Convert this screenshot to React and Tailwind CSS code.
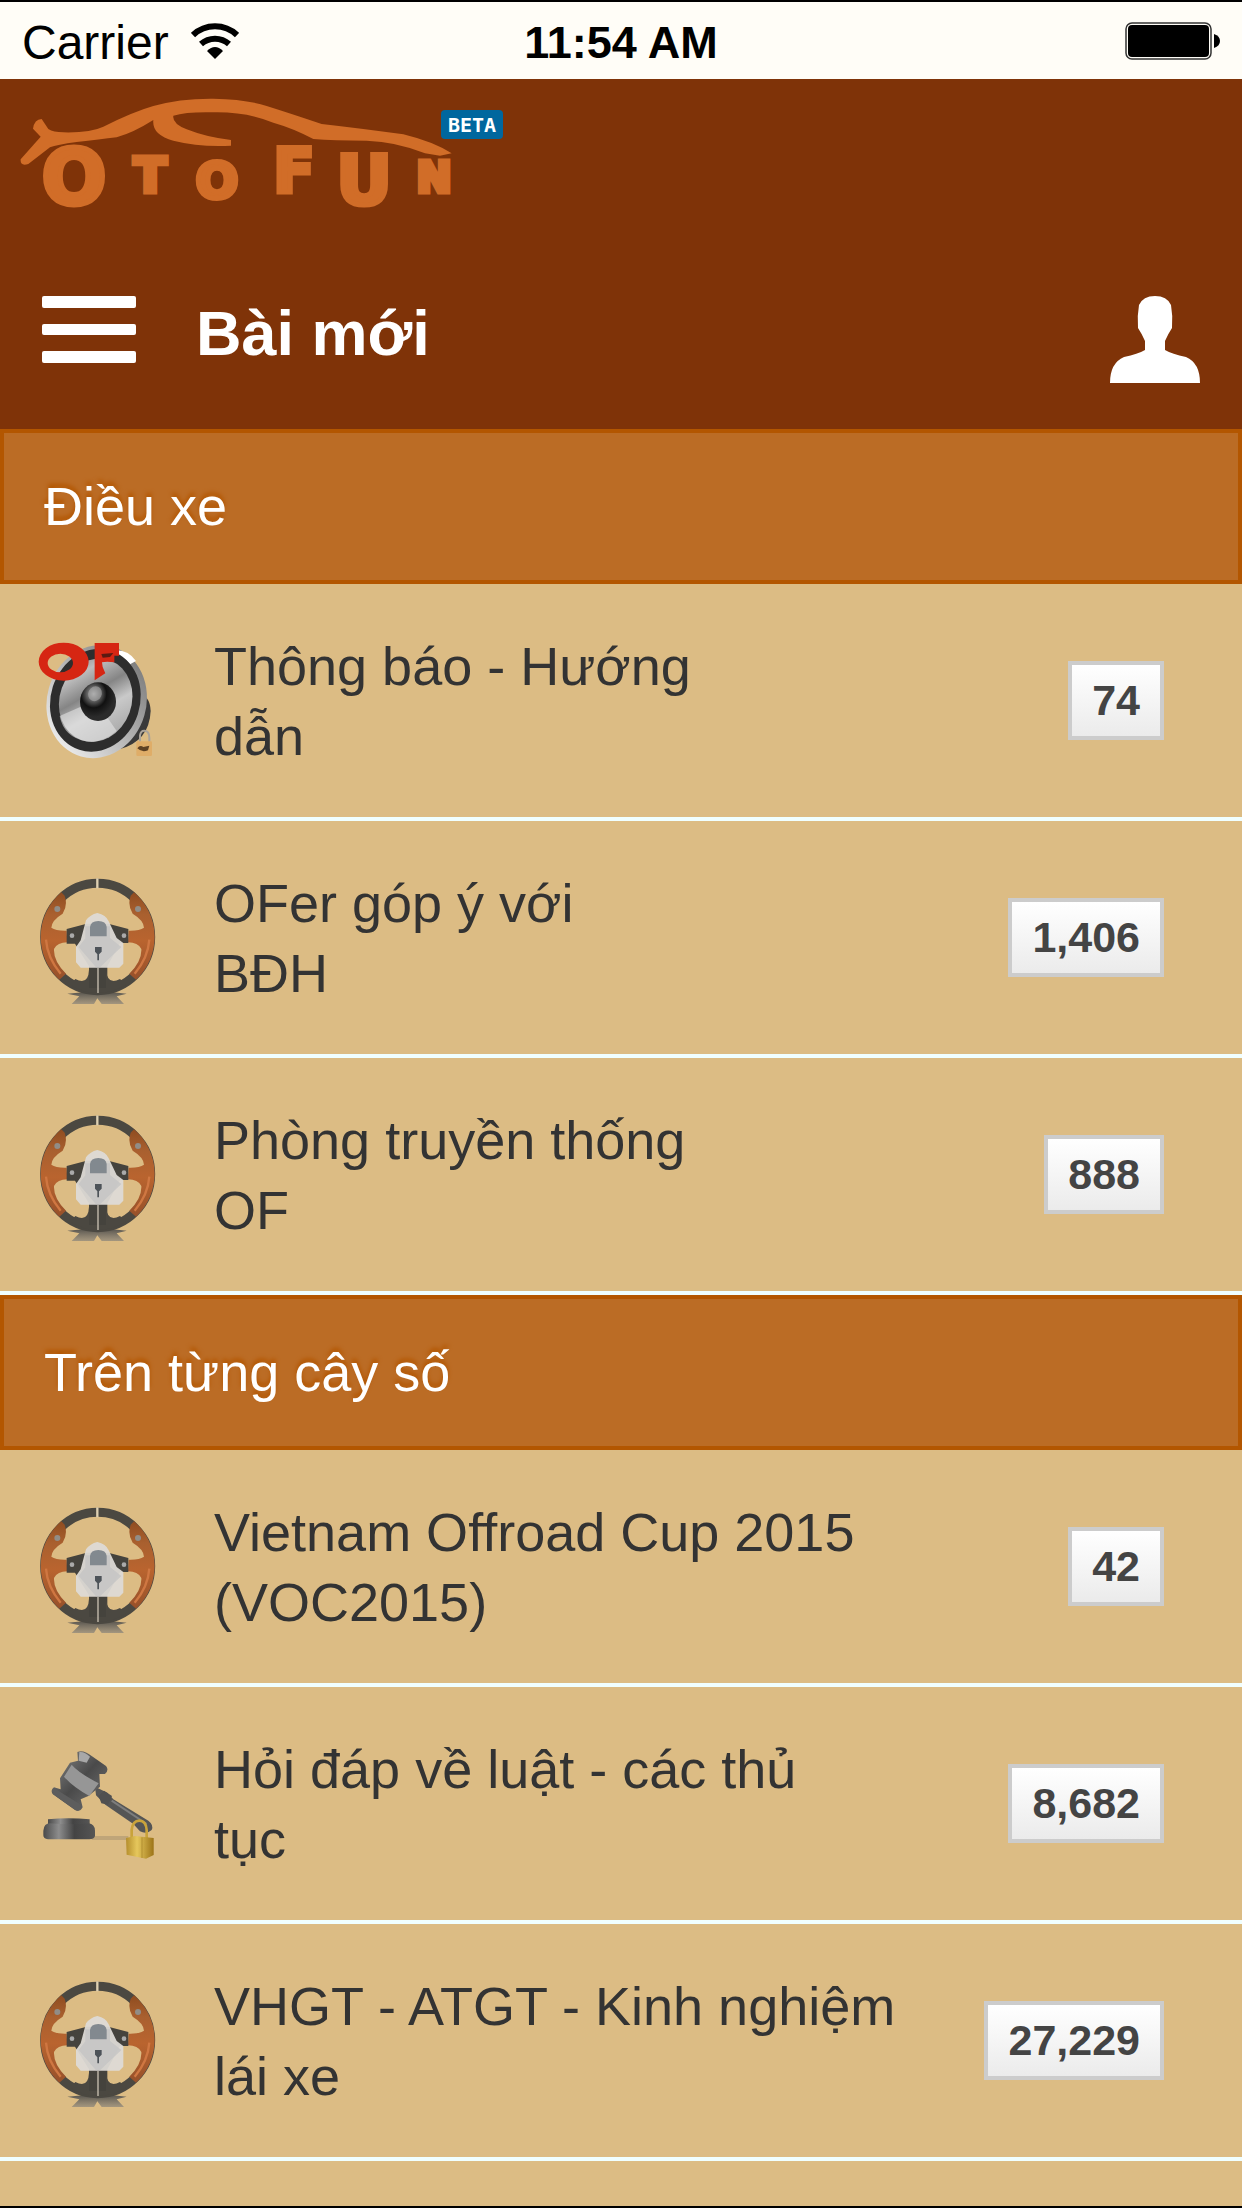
const sections = [
  {
    title: 'Điều xe',
    forums: [
      { icon: 'speaker', lines: ['Thông báo - Hướng', 'dẫn'], count: '74' },
      { icon: 'wheel', lines: ['OFer góp ý với', 'BĐH'], count: '1,406' },
      { icon: 'wheel', lines: ['Phòng truyền thống', 'OF'], count: '888' },
    ],
  },
  {
    title: 'Trên từng cây số',
    forums: [
      { icon: 'wheel', lines: ['Vietnam Offroad Cup 2015', '(VOC2015)'], count: '42' },
      { icon: 'gavel', lines: ['Hỏi đáp về luật - các thủ', 'tục'], count: '8,682' },
      { icon: 'wheel', lines: ['VHGT - ATGT - Kinh nghiệm', 'lái xe'], count: '27,229' },
    ],
  },
]

const Gradients = () => (
  <svg className="absolute size-0" aria-hidden="true">
    <defs>
      <linearGradient id="cone" x1="0" y1="0" x2="1" y2="1">
        <stop offset="0" stopColor="#777" />
        <stop offset=".22" stopColor="#bdbdbd" />
        <stop offset=".42" stopColor="#858585" />
        <stop offset=".6" stopColor="#c9c9c9" />
        <stop offset="1" stopColor="#999" />
      </linearGradient>
      <linearGradient id="ring" x1=".8" y1="0" x2=".2" y2="1">
        <stop offset="0" stopColor="#777" />
        <stop offset="1" stopColor="#f2f2f2" />
      </linearGradient>
      <radialGradient id="dome" cx=".38" cy=".3" r=".6">
        <stop offset="0" stopColor="#b5b5b5" />
        <stop offset=".35" stopColor="#555" />
        <stop offset=".6" stopColor="#111" />
        <stop offset="1" stopColor="#2b2b2b" />
      </radialGradient>
      <linearGradient id="wood" x1="0" y1="0" x2="0" y2="1">
        <stop offset="0" stopColor="#8f4c20" />
        <stop offset=".25" stopColor="#a9602f" />
        <stop offset=".55" stopColor="#b9642f" />
        <stop offset="1" stopColor="#96502a" />
      </linearGradient>
      <linearGradient id="shade" x1="0" y1="0" x2="0" y2="1">
        <stop offset="0" stopColor="#55524c" />
        <stop offset="1" stopColor="#8b857b" stopOpacity=".7" />
      </linearGradient>
      <linearGradient id="iron" x1="0" y1="0" x2="1" y2="1">
        <stop offset="0" stopColor="#8a8a8a" />
        <stop offset=".5" stopColor="#4a4a4a" />
        <stop offset="1" stopColor="#777" />
      </linearGradient>
      <linearGradient id="base" x1="0" y1="0" x2="1" y2="0">
        <stop offset="0" stopColor="#4a4a4a" />
        <stop offset=".3" stopColor="#8d8d8d" />
        <stop offset=".6" stopColor="#444" />
        <stop offset="1" stopColor="#555" />
      </linearGradient>
      <linearGradient id="gold" x1="0" y1="0" x2="1" y2="0">
        <stop offset="0" stopColor="#b58e2c" />
        <stop offset=".4" stopColor="#e6c75c" />
        <stop offset="1" stopColor="#9c7418" />
      </linearGradient>
    </defs>
  </svg>
)

const SpeakerIcon = () => (
  <svg viewBox="0 0 480 480" className="size-40 shrink-0" aria-hidden="true">
    <path d="M350 215 Q390 220 392 270 Q388 360 300 384 Z" fill="#3a3a3a" />
    <ellipse cx="230" cy="242" rx="149" ry="171" transform="rotate(16 230 242)" fill="url(#ring)" />
    <path d="M290 88 Q325 88 348 120 L330 130 Q312 108 288 102 Z" fill="#fff" />
    <ellipse cx="226" cy="238" rx="134" ry="156" transform="rotate(18 226 238)" fill="#2d2d2d" />
    <ellipse cx="227" cy="238" rx="108" ry="127" transform="rotate(20 227 238)" fill="url(#cone)" />
    <path d="M227 238 L119 285 Q132 350 200 361 Q250 366 290 330 Z" fill="#e4e4e4" opacity=".6" />
    <ellipse cx="234" cy="242" rx="54" ry="58" fill="url(#dome)" />
    <ellipse cx="225" cy="218" rx="20" ry="23" transform="rotate(25 225 218)" fill="#aaa" opacity=".6" />
    <path
      d="M56 122 A75 57 0 0 1 206 122 A75 57 0 0 1 56 122 M83 126 A38 28 0 0 0 159 126 A38 28 0 0 0 83 126"
      fill="#d62613"
      fillRule="evenodd"
    />
    <path d="M224 66 H297 V104 H283 V124 L262 122 L246 124 L248 138 L256 157 L224 178 Z" fill="#d62613" />
    <path d="M244 99 L280 96 L270 108 L248 110 Z" fill="#5a1a12" />
    <path d="M360 362 V343 Q362 328 374 329 Q388 330 388 350 V362" fill="none" stroke="#aaa39a" strokeWidth="6" />
    <rect x="349" y="361" width="47" height="44" rx="4" fill="#dfad68" />
    <path d="M352 382 Q360 370 370 378 L388 374 L384 388 Q366 396 352 382" fill="#5d4123" />
  </svg>
)

const WheelIcon = () => (
  <svg viewBox="0 -5 480 480" className="size-40 shrink-0" aria-hidden="true">
    <path d="M142 402 L205 396 H265 L320 402 L290 410 L312 433 H245 L232 416 L222 433 H155 L178 410 Z" fill="url(#shade)" />
    <ellipse cx="233" cy="232" rx="159" ry="161" fill="none" stroke="#4b4841" strokeWidth="27" />
    <path d="M124 98 A172 174 0 0 0 118 360 L138 342 Q100 304 102 268 Q112 248 142 248 L140 213 Q108 214 94 204 Q95 182 128 162 Q144 138 134 108 Z" fill="url(#wood)" />
    <path d="M342 98 A172 174 0 0 1 348 360 L328 342 Q366 304 364 268 Q354 248 324 248 L326 213 Q358 214 372 204 Q371 182 338 162 Q322 138 332 108 Z" fill="url(#wood)" />
    <path d="M78 240 Q82 295 122 342" fill="none" stroke="#cf7742" strokeWidth="7" />
    <path d="M388 240 Q384 295 344 342" fill="none" stroke="#cf7742" strokeWidth="7" />
    <path d="M140 208 L200 192 H265 L325 208 V250 H300 L262 320 V385 H207 V320 L165 252 H140 Z" fill="#45433d" />
    <path d="M166 358 Q205 378 207 330 V388 H258 V330 Q262 378 300 358 L318 375 Q232 425 150 375 Z" fill="#4b4841" />
    <circle cx="112" cy="148" r="9" fill="#918d87" />
    <circle cx="354" cy="148" r="9" fill="#918d87" />
    <circle cx="156" cy="228" r="7" fill="#aaa" />
    <circle cx="312" cy="228" r="7" fill="#aaa" />
    <path d="M234 325 V400" stroke="#c9c1b2" strokeWidth="4" />
    <path d="M232 56 V86" stroke="#dfd0b2" strokeWidth="7" />
    <path d="M198 182 Q210 165 232 160 Q258 165 266 185 L290 235 L310 250 V312 L298 324 H182 L168 308 V262 L182 242 Z" fill="#dedbd7" opacity=".94" />
    <path d="M196 200 H270 V235 L304 262 L240 323 H228 L176 262 L196 236 Z" fill="#c4c4c4" opacity=".8" />
    <path d="M210 230 V202 Q212 184 235 184 Q258 184 260 202 V230 Z" fill="#82898f" />
    <path d="M225 262 H245 V276 L237 284 V302 H232 V284 L225 276 Z" fill="#4d5359" />
  </svg>
)

const GavelIcon = () => (
  <svg viewBox="0 -18 480 480" className="size-40 shrink-0" aria-hidden="true">
    <path d="M215 318 H325 V330 H215 Z" fill="#8a7c64" opacity=".35" />
    <path d="M84 268 Q145 262 209 268 V285 H84 Z" fill="url(#base)" />
    <path d="M70 302 Q72 280 90 280 Q150 286 206 280 Q224 282 225 302 V318 Q222 328 208 328 H84 Q70 326 70 316 Z" fill="url(#base)" />
    <path d="M225 170 L262 188 L280 208 L385 272 Q402 285 395 300 Q380 314 360 304 L340 282 L256 224 L228 196 Z" fill="#555" />
    <path d="M275 212 L380 282" stroke="#7d7d7d" strokeWidth="6" />
    <path d="M236 198 L252 182 L276 198 L264 224 L244 220 Z" fill="#505050" />
    <path d="M172 66 Q190 58 215 78 L258 108 Q268 120 255 132 L238 132 L240 170 L205 198 L182 208 L188 232 Q180 248 165 240 L98 192 Q90 180 102 172 L122 178 L120 145 L150 98 L174 92 Z" fill="url(#iron)" />
    <path d="M155 104 Q175 128 236 160 L208 198 Q160 172 132 140 Z" fill="#969696" />
    <path d="M178 66 Q194 64 210 80 L200 98 L176 92 Z" fill="#a8a8a8" />
    <path d="M102 174 L140 198 L185 226 Q182 244 166 240 L98 192 Z" fill="#5d5d5d" />
    <path d="M335 325 V300 Q338 272 358 272 Q378 272 380 300 V325" fill="none" stroke="#c9a33b" strokeWidth="8" />
    <path d="M318 324 L345 318 L401 324 V375 L378 386 L320 374 Z" fill="url(#gold)" />
    <path d="M366 322 V384" stroke="#b18e31" strokeWidth="3" />
  </svg>
)

const icons = { speaker: SpeakerIcon, wheel: WheelIcon, gavel: GavelIcon }

const StatusBar = () => (
  <div className="grid h-[77px] grid-cols-3 items-center bg-[#fffdf7] px-[22px] text-black">
    <div className="flex items-center gap-[22px]">
      <span className="pt-1 text-[48px] leading-[70px]">Carrier</span>
      <svg width="48" height="36" viewBox="0 0 48 36" aria-hidden="true">
        <path d="M2 12 A32 32 0 0 1 46 12" fill="none" stroke="#000" strokeWidth="6" />
        <path d="M10 21 A21 21 0 0 1 38 21" fill="none" stroke="#000" strokeWidth="6" />
        <path d="M16 28 Q24 20 32 28 L24 36 Z" />
      </svg>
    </div>
    <span className="pt-1 text-center text-[45px] leading-[70px] font-bold">11:54 AM</span>
    <svg width="95" height="38" viewBox="0 0 95 38" className="justify-self-end" aria-hidden="true">
      <rect x="1" y="1" width="85" height="36" rx="6" fill="none" stroke="#333" strokeWidth="1.5" />
      <rect x="3" y="3" width="81" height="32" rx="4" />
      <path d="M89 12 Q95 14 95 19 Q95 24 89 26 Z" />
    </svg>
  </div>
)

const Logo = () => (
  <svg width="520" height="151" viewBox="0 0 520 151" className="block max-w-full" role="img" aria-label="OtoFun beta">
    <g transform="translate(0 -79) scale(0.33333)">
      <path
        d="M62 478 L122 410 L99 386 Q103 358 125 357 L145 387 Q160 397 190 397 Q270 399 310 380 Q400 335 460 318 Q540 295 640 296 Q740 298 800 318 Q870 340 965 372 Q1080 385 1210 403 Q1300 425 1355 460 L1320 467 L1275 460 Q1190 425 1100 422 Q1000 422 940 417 Q880 385 820 368 Q740 335 640 337 Q560 335 520 347 Q516 370 560 388 Q620 412 693 420 V437 Q600 442 520 422 Q455 405 460 360 Q400 398 350 412 Q300 418 230 426 Q170 434 150 442 L85 492 Q60 500 62 478 Z"
        fill="#d16d28"
      />
    </g>
    <g fill="#d16d28" stroke="#d16d28" strokeWidth="5" textAnchor="middle" className="font-['DejaVu_Sans'] font-bold">
      <text x="74" y="125" fontSize="76">O</text>
      <text x="150" y="113" fontSize="48">T</text>
      <text x="217" y="119" fontSize="50">O</text>
      <text x="294" y="113" fontSize="60">F</text>
      <text x="364" y="125" fontSize="68">U</text>
      <text x="434" y="113" fontSize="42">N</text>
    </g>
    <rect x="441" y="31" width="62" height="29" rx="4" fill="#00679e" />
    <text x="472" y="53" fontSize="20" fill="#fff" textAnchor="middle" className="font-['DejaVu_Sans_Mono'] font-bold">
      BETA
    </text>
  </svg>
)

const Header = () => (
  <header className="bg-[#7f3308] text-white">
    <a href="#home" className="block">
      <Logo />
    </a>
    <nav className="flex items-start px-[42px] pt-[66px] pb-[46px]">
      <button type="button" aria-label="Menu">
        <svg width="94" height="67" viewBox="0 0 94 67" fill="#fff" className="block">
          <rect y="0" width="94" height="12" rx="2" />
          <rect y="28" width="94" height="11" rx="2" />
          <rect y="55" width="94" height="12" rx="2" />
        </svg>
      </button>
      <h1 className="ml-[60px] flex-1 text-[63px] leading-[74px] font-bold">Bài mới</h1>
      <button type="button" aria-label="Tài khoản">
        <svg width="90" height="87" viewBox="0 0 90 87" fill="#fff" className="block">
          <path d="M45 0 Q57 0 61 9 Q63 20 62 32 Q58 38 55 45 V54 Q62 58 76 61 Q90 67 90 87 H0 Q0 67 14 61 Q28 58 35 54 V45 Q32 38 28 32 Q27 20 29 9 Q33 0 45 0 Z" />
        </svg>
      </button>
    </nav>
  </header>
)

const ForumRow = ({ forum }) => {
  const Icon = icons[forum.icon]
  return (
    <li>
      <a href="#forum" className="flex h-[237px] items-center border-b-4 border-[#f0ffff] pr-[78px] pl-5">
        <Icon />
        <span className="ml-[34px] flex-1 text-[54px] leading-[70px] text-[#333]">
          {forum.lines[0]}
          <br />
          {forum.lines[1]}
        </span>
        <span className="border-4 border-[#ccc] bg-linear-to-b from-white to-[#ebebeb] px-5 text-[43px] leading-[71px] font-bold text-[#444]">
          {forum.count}
        </span>
      </a>
    </li>
  )
}

export default function App() {
  return (
    <div className="flex min-h-screen flex-col border-y-2 border-black bg-[#dcbc84] font-['Liberation_Sans',Arial,sans-serif]">
      <Gradients />
      <StatusBar />
      <Header />
      <main>
        {sections.map((section) => (
          <section key={section.title}>
            <h2 className="border-4 border-[#b35600] bg-[#bb6c25] px-10 text-[54px] leading-[147px] text-white [text-shadow:0_-4px_4px_#b35600]">
              {section.title}
            </h2>
            <ul>
              {section.forums.map((forum) => (
                <ForumRow key={forum.lines[0]} forum={forum} />
              ))}
            </ul>
          </section>
        ))}
      </main>
    </div>
  )
}
